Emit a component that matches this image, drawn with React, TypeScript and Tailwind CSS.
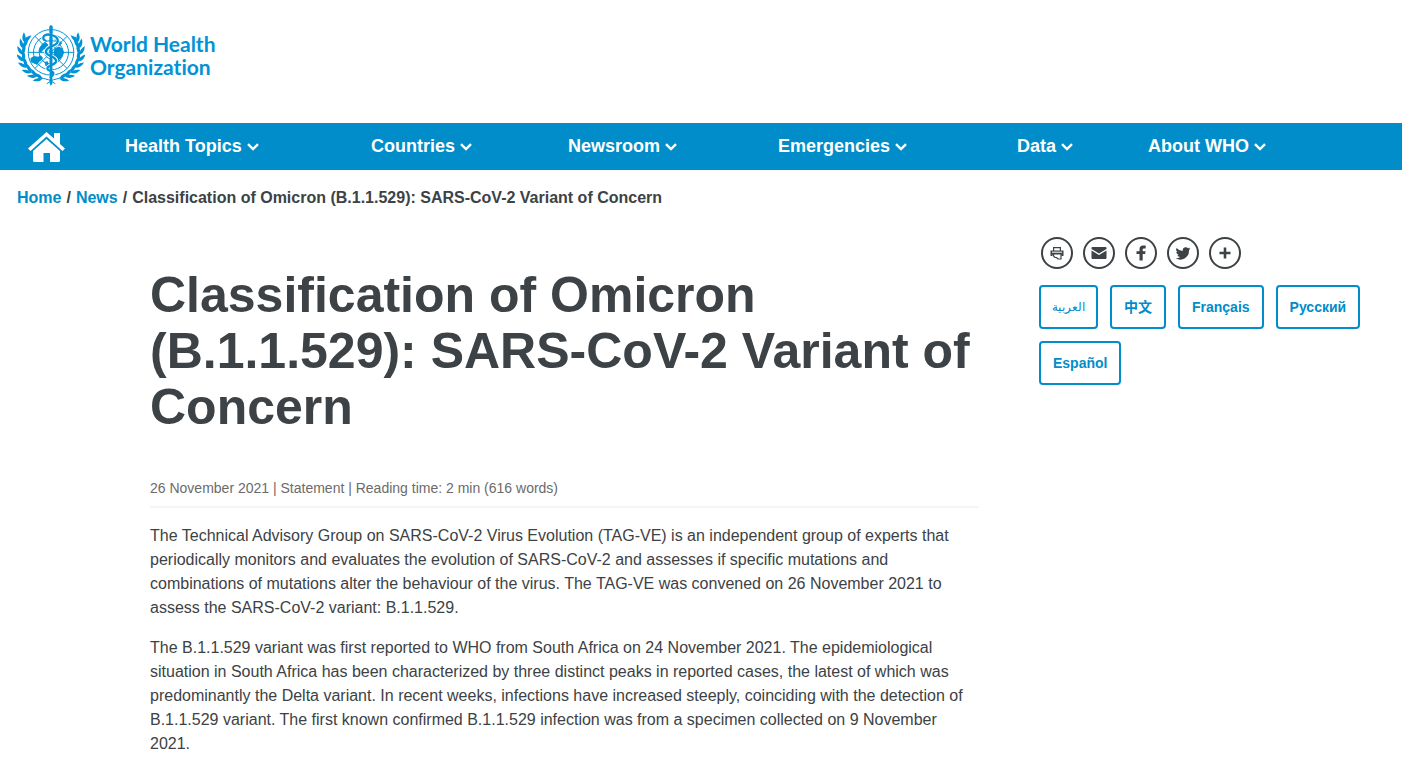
import type { ReactNode } from "react";

const navItems = [
  "Health Topics",
  "Countries",
  "Newsroom",
  "Emergencies",
  "Data",
  "About WHO",
];

const languages = [
  { code: "zh", label: "中文" },
  { code: "fr", label: "Français" },
  { code: "ru", label: "Русский" },
  { code: "es", label: "Español" },
];

const paragraphs = [
  "The Technical Advisory Group on SARS-CoV-2 Virus Evolution (TAG-VE) is an independent group of experts that periodically monitors and evaluates the evolution of SARS-CoV-2 and assesses if specific mutations and combinations of mutations alter the behaviour of the virus. The TAG-VE was convened on 26 November 2021 to assess the SARS-CoV-2 variant: B.1.1.529.",
  "The B.1.1.529 variant was first reported to WHO from South Africa on 24 November 2021. The epidemiological situation in South Africa has been characterized by three distinct peaks in reported cases, the latest of which was predominantly the Delta variant. In recent weeks, infections have increased steeply, coinciding with the detection of B.1.1.529 variant. The first known confirmed B.1.1.529 infection was from a specimen collected on 9 November 2021.",
];

// Points along the left stem with its direction there; each carries two leaves
const leafPairs = [
  [98, 177, 198],
  [81, 170, 212],
  [64, 159, 225],
  [50, 143, 238],
  [41, 124, 252],
  [37, 104, 268],
  [38, 84, 284],
  [43, 66, 296],
];

function Branch() {
  return (
    <g>
      <path
        d="M50 50C32 84 34 122 54 147C72 167 94 175 117 180L137 192"
        fill="none"
        stroke="currentColor"
        strokeWidth="3"
      />
      {leafPairs.map(([x, y, angle]) =>
        [-28, 20].map((spread) => (
          <path
            key={`${x}-${spread}`}
            d="M0 0C7 -7 18 -7 30 0C18 6 7 6 0 0Z"
            transform={`translate(${x} ${y}) rotate(${angle + spread})`}
            fill="currentColor"
          />
        ))
      )}
    </g>
  );
}

function Emblem() {
  return (
    <svg
      viewBox="21 12 206 186"
      className="h-[62px] w-[68px] shrink-0"
      aria-hidden="true"
    >
      <Branch />
      <g transform="translate(248 0) scale(-1 1)">
        <Branch />
      </g>
      {/* Globe */}
      <g fill="none" stroke="currentColor" strokeWidth="3">
        <circle cx="124" cy="97" r="69" />
        <circle cx="124" cy="97" r="53" />
        <circle cx="124" cy="97" r="36" />
        <circle cx="124" cy="97" r="19" />
        <path d="M55 97H193M75 48L173 146M75 146L173 48" />
      </g>
      <path
        d="M62 115L72 108L85 110L93 106L100 114L95 121L88 126L82 135L71 130L62 126ZM98 73L108 66L116 74L112 86L101 88L94 98L86 93L90 82ZM134 86L148 79L160 86L164 99L156 112L145 124L137 116L132 102ZM135 55L148 60L158 69L150 77L137 73ZM104 126L114 124L119 137L109 142Z"
        fill="currentColor"
      />
      {/* Rod and serpent */}
      <path
        d="M119 20C119 14 129 14 129 20L127 193L123 198L121 193Z"
        fill="currentColor"
      />
      <g fill="none" strokeLinecap="round">
        <path
          d="M102 58C96 48 111 39 124 45C148 49 151 68 132 76C113 83 104 91 111 101C119 110 144 112 139 126C136 136 111 136 113 147C115 156 134 151 131 163C130 168 127 170 123 172"
          stroke="white"
          strokeWidth="12"
        />
        <path
          d="M102 58C96 48 111 39 124 45C148 49 151 68 132 76C113 83 104 91 111 101C119 110 144 112 139 126C136 136 111 136 113 147C115 156 134 151 131 163C130 168 127 170 123 172"
          stroke="currentColor"
          strokeWidth="7"
        />
        <path d="M124 20V190" stroke="currentColor" strokeWidth="8" />
        <path d="M102 58L109 62" stroke="currentColor" strokeWidth="5" />
      </g>
    </svg>
  );
}

function HomeIcon() {
  return (
    <svg viewBox="0 0 37 30" className="h-[30px] w-[37px]" fill="currentColor">
      <path d="M18.500 0L26 6.600V1H32V12L37 16.500L34.500 19L18.500 4.500L2.500 19L0 16.500Z" />
      <path d="M18.500 7L32 19V28.500Q32 30 30.500 30H22V21H15.500V30H6.500Q5 30 5 28.500V19Z" />
    </svg>
  );
}

function Chevron() {
  return (
    <svg
      viewBox="0 0 12 8"
      className="mt-0.5 h-2 w-3"
      fill="none"
      stroke="currentColor"
      strokeWidth="2.400"
      aria-hidden="true"
    >
      <path d="M1 1.200L6 6L11 1.200" />
    </svg>
  );
}

function ShareButton({ label, children }: { label: string; children: ReactNode }) {
  return (
    <button
      aria-label={label}
      className="flex size-8 items-center justify-center rounded-full border-2 border-[#3c4245]"
    >
      <svg viewBox="0 0 16 16" className="size-4" fill="currentColor">
        {children}
      </svg>
    </button>
  );
}

export default function App() {
  return (
    <div className="min-h-screen bg-white font-['Liberation_Sans',Arial,sans-serif] text-base text-[#3c4245]">
      <header>
        <div className="px-[17px] pt-6 pb-[37px]">
          <a href="#" className="flex w-fit items-center gap-[5px] text-[#0093d5]">
            <Emblem />
            <span className="flex flex-col font-[Lato,sans-serif] text-[21px] leading-[23px] font-bold [font-variant-ligatures:none]">
              <span>World Health</span>
              <span>Organization</span>
            </span>
          </a>
        </div>
        <nav className="flex h-[47px] items-center bg-[#008dc9] text-white">
          <a href="#" aria-label="Home" className="w-[125px] shrink-0 pl-7">
            <HomeIcon />
          </a>
          <ul className="grid grow grid-cols-[246fr_197fr_210fr_239fr_131fr_254fr] pb-0.5 text-lg font-bold">
            {navItems.map((item) => (
              <li key={item}>
                <button className="flex items-center gap-[5px] whitespace-nowrap">
                  {item}
                  <Chevron />
                </button>
              </li>
            ))}
          </ul>
        </nav>
      </header>

      <nav aria-label="Breadcrumb" className="flex gap-[5px] px-[17px] pt-4 font-bold">
        <a href="#" className="text-[#008dc9]">Home</a>
        <span>/</span>
        <a href="#" className="text-[#008dc9]">News</a>
        <span>/</span>
        <span>Classification of Omicron (B.1.1.529): SARS-CoV-2 Variant of Concern</span>
      </nav>

      <main className="flex items-start gap-[60px] pt-[27px] pl-[150px]">
        <article className="min-w-0 grow pt-[30px]">
          <h1 className="text-[50px] leading-[56px] font-bold">
            Classification of Omicron (B.1.1.529): SARS-CoV-2 Variant of Concern
          </h1>
          <p className="mt-[43px] border-b-2 border-[#f5f5f5] pb-2 text-sm text-[#6b6b6b]">
            26 November 2021 | Statement | Reading time: 2 min (616 words)
          </p>
          {paragraphs.map((text) => (
            <p key={text} className="mt-4">
              {text}
            </p>
          ))}
        </article>

        <aside className="w-[363px] shrink-0">
          <div className="flex gap-2.5 pl-0.5">
            <ShareButton label="Print">
              <path d="M4 2H12V5.500H10.800V3.200H5.200V5.500H4ZM1.500 5.500H14.500V11H12.500V9.500H3.500V11H1.500Z" />
              <path d="M3 7.200H13" stroke="white" />
              <path
                d="M4.500 9H12V14H9L7.500 12.500H6L4.500 11Z"
                fill="white"
                stroke="currentColor"
                strokeWidth="1.200"
              />
            </ShareButton>
            <ShareButton label="Email">
              <path d="M1.500 2H14.500Q15.500 2 15.500 3V4L8 8.500L0.500 4V3Q0.500 2 1.500 2Z" />
              <path d="M0.500 5.500L8 10L15.500 5.500V13Q15.500 14 14.500 14H1.500Q0.500 14 0.500 13Z" />
            </ShareButton>
            <ShareButton label="Facebook">
              <path d="M6.500 15.500V9H3.500V6.200H6.500V4.200Q6.500 .5 10 .5H12.700V3.400H10.900Q9.700 3.400 9.700 4.600V6.200H12.600L12.100 9H9.700V15.500Z" />
            </ShareButton>
            <ShareButton label="Twitter">
              <path d="M15.500 3.600Q14.700 4 13.800 4.100Q14.700 3.500 15 2.500Q14.200 3 13.100 3.200A3.100 3.100 0 0 0 7.800 6Q4.100 5.800 1.600 2.900Q.2 5.700 2.600 7.100Q1.800 7.100 1.200 6.700Q1.300 9.100 3.700 9.800Q3 10 2.300 9.900Q3 11.900 5.200 12Q3.200 13.500 .6 13.300Q5.500 16.100 10 13.300Q14.200 10.500 14 5.200Q14.900 4.500 15.500 3.600Z" />
            </ShareButton>
            <ShareButton label="More">
              <path d="M6.700 2.500H9.300V6.700H13.500V9.300H9.300V13.500H6.700V9.300H2.500V6.700H6.700Z" />
            </ShareButton>
          </div>
          <div className="mt-4 flex flex-wrap gap-3 text-sm font-bold text-[#008dc9]">
            <a
              href="#"
              lang="ar"
              className="flex h-11 w-[59px] items-center justify-center rounded-sm border-2 border-[#008dc9] text-xs font-normal"
            >
              العربية
            </a>
            {languages.map(({ code, label }) => (
              <a
                key={code}
                href="#"
                lang={code}
                className="flex h-11 items-center rounded-sm border-2 border-[#008dc9] px-3 font-['Liberation_Sans','Noto_Sans_CJK_SC',sans-serif]"
              >
                {label}
              </a>
            ))}
          </div>
        </aside>
      </main>
    </div>
  );
}
